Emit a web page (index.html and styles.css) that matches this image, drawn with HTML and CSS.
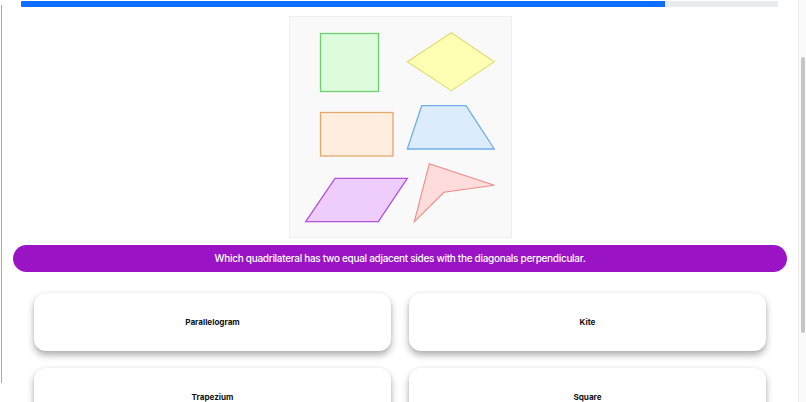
FILE: index.html
```html
<!DOCTYPE html>
<html lang="en">
<head>
<meta charset="utf-8">
<title>Quiz</title>
<link rel="stylesheet" href="styles.css">
</head>
<body>
<div class="page">
  <div class="progress"><div class="progress-fill" style="width:85.1%"></div></div>
  <div class="figure">
    <svg class="shapes" width="221" height="220" viewBox="0 0 221 220">
      <rect x="30.5" y="16.5" width="58" height="58" fill="#dcfcdc" stroke="#6fd06f" stroke-width="1.3"/>
      <polygon points="161.3,15.7 204.3,44.7 161.3,73.7 117.3,44.7" fill="#ffffb4" stroke="#dede74" stroke-width="1.1"/>
      <rect x="30.5" y="95.5" width="72.5" height="43.5" fill="#ffeedf" stroke="#e0aa6c" stroke-width="1.3"/>
      <polygon points="131.7,88.7 176,88.7 204.3,132 117.3,132" fill="#dcecfd" stroke="#6faee8" stroke-width="1.3"/>
      <polygon points="45,161.3 117.3,161.3 88.3,204.7 15.7,204.7" fill="#eecdfd" stroke="#b052de" stroke-width="1.3"/>
      <polygon points="139.3,146.7 204.3,168.3 154,175.3 124.3,204.7" fill="#ffdcdc" stroke="#ec8a8a" stroke-width="1.1"/>
    </svg>
  </div>
  <div class="question">Which quadrilateral has two equal adjacent sides with the diagonals perpendicular.</div>
  <div class="options">
    <button class="option">Parallelogram</button>
    <button class="option">Kite</button>
    <button class="option">Trapezium</button>
    <button class="option">Square</button>
  </div>
</div>
<div class="scrollbar"><div class="scroll-thumb"></div></div>
</body>
</html>
```
FILE: styles.css
```css
html, body {
  margin: 0;
  padding: 0;
  background: #ffffff;
}
body {
  font-family: "Inter", "Noto Sans", sans-serif;
  color: #111;
}
.page {
  position: relative;
  padding: 1px 0 160px;
}
.page::before {
  content: "";
  position: absolute;
  left: 1px;
  top: 5px;
  width: 1px;
  height: 378px;
  background: #a9a8b8;
}
.progress {
  margin-left: 21px;
  width: 757px;
  height: 6px;
  background: #e9ecef;
  border-radius: 1px;
  overflow: hidden;
}
.progress-fill {
  height: 100%;
  background: #0d6efd;
}
.figure {
  margin: 9px 0 0 289px;
  width: 221px;
  height: 220px;
  border: 1px solid #eeeeee;
  background: #f9f9f9;
}
.shapes {
  display: block;
}
.question {
  margin: 7px 0 0 13px;
  width: 774px;
  height: 27px;
  border-radius: 14px;
  background: #9a14c6;
  color: #ffffff;
  font-size: 10px;
  font-weight: 500;
  line-height: 27px;
  text-align: center;
  letter-spacing: -0.3px;
}
.options {
  margin: 21px 0 0 34px;
  width: 732px;
  display: grid;
  grid-template-columns: 1fr 1fr;
  column-gap: 18px;
  row-gap: 17px;
}
.option {
  height: 58px;
  border: none;
  border-radius: 12px;
  background: #ffffff;
  box-shadow: 0 4px 7px rgba(0, 0, 0, 0.32), 0 0 3px rgba(0, 0, 0, 0.06);
  font-family: "Inter", "Noto Sans", sans-serif;
  font-weight: 700;
  font-size: 8.1px;
  color: #111;
  padding: 0;
}
.scrollbar {
  position: fixed;
  top: 0;
  right: 0;
  width: 7px;
  height: 100%;
  background: #fafafa;
  border-left: 1px solid #ececec;
}
.scroll-thumb {
  margin: 57px 0 0 2px;
  width: 4px;
  height: 276px;
  border-radius: 2px;
  background: #c6c6c6;
}
```
